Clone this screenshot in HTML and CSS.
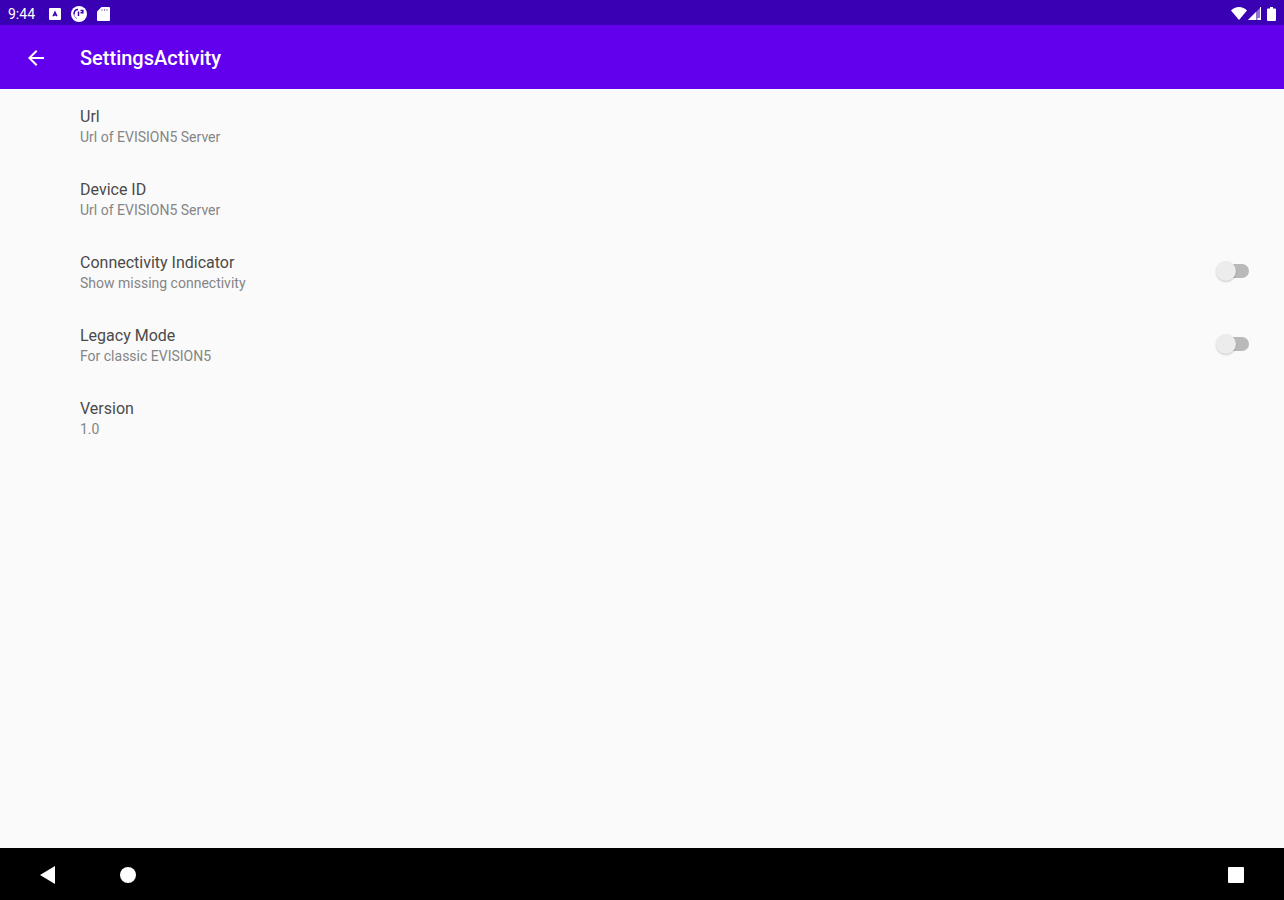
FILE: index.html
```html
<!DOCTYPE html>
<html lang="en">
<head>
  <meta charset="UTF-8">
  <meta name="viewport" content="width=device-width, initial-scale=1.0">
  <title>SettingsActivity</title>
  <link rel="stylesheet" href="styles.css">
</head>
<body>

  <div class="status-bar">
    <div class="status-left">
      <span class="clock">9:44</span>
      <svg width="12" height="12" viewBox="0 0 12 12">
        <rect width="12" height="12" rx="1" fill="#fff"/>
        <path d="M4 8.200L6 4l2 4.200M4.700 7h2.600" fill="none" stroke="#3a00b3" stroke-width="1.300"/>
      </svg>
      <svg width="16" height="16" viewBox="0 0 16 16">
        <circle cx="8" cy="8" r="8" fill="#fff"/>
        <path d="M3 8.500C3 5 4.500 3.500 7 3.500M7.500 10V5.500M9.500 4.500h2.300v2.300H9.500" fill="none" stroke="#3a00b3" stroke-width="1.500"/>
        <path d="M3 8.500c.5 2.500 1.500 3.500 3 4" fill="none" stroke="#3a00b3" stroke-opacity=".5"/>
      </svg>
      <svg width="13" height="14" viewBox="0 0 13 14">
        <path d="M4.500 0H12a1 1 0 0 1 1 1v12a1 1 0 0 1-1 1H1a1 1 0 0 1-1-1V4.500z" fill="#fff"/>
        <path d="M5 2v2M7.500 2v2M10 2v2" stroke="#3a00b3" stroke-opacity=".5"/>
      </svg>
    </div>
    <div class="status-right">
      <svg width="16" height="13" viewBox="0 0 16 13">
        <path d="M8 13L0 3.500C2 1.200 5 0 8 0s6 1.200 8 3.500z" fill="#fff"/>
      </svg>
      <svg width="13" height="13" viewBox="0 0 13 13">
        <path d="M0 13L13 0v13z" fill="#fff" fill-opacity=".45"/>
        <path d="M0 13l8-8v8zM12 0h1v13h-1zM9.500 11H12v2H9.500z" fill="#fff"/>
      </svg>
      <svg class="battery" width="9" height="14" viewBox="0 0 9 14">
        <path d="M3 0h3v1.500h2a1 1 0 0 1 1 1V13a1 1 0 0 1-1 1H1a1 1 0 0 1-1-1V2.500a1 1 0 0 1 1-1h2z" fill="#fff"/>
      </svg>
    </div>
  </div>

  <header>
    <button class="back" aria-label="Navigate up">
      <svg width="24" height="24" viewBox="0 0 24 24">
        <path d="M20 11H7.830l5.590-5.590L12 4l-8 8 8 8 1.410-1.410L7.830 13H20z" fill="#fff"/>
      </svg>
    </button>
    <h1>SettingsActivity</h1>
  </header>

  <main>
    <div class="pref">
      <div>
        <div class="title">Url</div>
        <div class="summary">Url of EVISION5 Server</div>
      </div>
    </div>
    <div class="pref">
      <div>
        <div class="title">Device ID</div>
        <div class="summary">Url of EVISION5 Server</div>
      </div>
    </div>
    <label class="pref" for="connectivity">
      <span>
        <span class="title">Connectivity Indicator</span>
        <span class="summary">Show missing connectivity</span>
      </span>
      <input type="checkbox" class="switch" id="connectivity">
    </label>
    <label class="pref" for="legacy">
      <span>
        <span class="title">Legacy Mode</span>
        <span class="summary">For classic EVISION5</span>
      </span>
      <input type="checkbox" class="switch" id="legacy">
    </label>
    <div class="pref">
      <div>
        <div class="title">Version</div>
        <div class="summary">1.0</div>
      </div>
    </div>
  </main>

  <nav>
    <button aria-label="Back">
      <svg width="16" height="18" viewBox="0 0 16 18"><path d="M0 9L15 0v18z" fill="#fff"/></svg>
    </button>
    <button aria-label="Home">
      <svg width="16" height="16" viewBox="0 0 16 16"><circle cx="8" cy="8" r="8" fill="#fff"/></svg>
    </button>
    <button class="recents" aria-label="Recent apps">
      <svg width="16" height="16" viewBox="0 0 16 16"><rect width="16" height="16" rx="1" fill="#fff"/></svg>
    </button>
  </nav>

</body>
</html>
```

FILE: styles.css
```css
* {
  box-sizing: border-box;
}
body {
  display: flex;
  flex-direction: column;
  min-height: 100vh;
  margin: 0;
  font-family: Roboto, "Liberation Sans", sans-serif;
  background: #fafafa;
}
svg {
  display: block;
}
button {
  display: flex;
  align-items: center;
  justify-content: center;
  padding: 0;
  border: none;
  background: none;
  cursor: pointer;
}
.status-bar {
  display: flex;
  justify-content: space-between;
  height: 25px;
  padding: 2px 8px 0;
  background: #3a00b3;
  color: #fff;
}
.status-left,
.status-right {
  display: flex;
  align-items: center;
}
.status-left {
  gap: 10px;
}
.status-right {
  gap: 1px;
}
.clock {
  width: 31px;
  font-size: 14px;
  line-height: 16px;
}
.battery {
  margin-left: 5px;
}
header {
  display: flex;
  align-items: center;
  height: 64px;
  padding: 2px 12px 0;
  background: #6200ee;
  color: #fff;
}
.back {
  width: 48px;
  height: 48px;
}
h1 {
  margin: 0 0 0 20px;
  font-size: 20px;
  line-height: 24px;
  font-weight: 500;
}
main {
  flex: 1;
  padding-top: 1px;
}
.pref {
  display: flex;
  align-items: center;
  justify-content: space-between;
  min-height: 73px;
  padding: 16px 34px 16px 80px;
}
.title,
.summary {
  display: block;
  line-height: 20px;
}
.title {
  font-size: 16px;
  color: #4a4a4a;
}
.summary {
  font-size: 14px;
  color: #858585;
}
.switch {
  appearance: none;
  position: relative;
  width: 34px;
  height: 20px;
  margin: 0 0 4px;
  cursor: pointer;
}
/* track */
.switch::before {
  content: "";
  position: absolute;
  top: 3px;
  left: 2px;
  right: 1px;
  height: 14px;
  border-radius: 7px;
  background: #b9b9b9;
}
/* thumb */
.switch::after {
  content: "";
  position: absolute;
  top: 0;
  left: 0;
  width: 20px;
  height: 20px;
  border-radius: 50%;
  background: #ececec;
  box-shadow: 0 1px 2px rgba(0,0,0,0.2);
}
.switch:checked::after {
  left: 14px;
  background: #6200ee;
}
nav {
  display: flex;
  align-items: center;
  height: 52px;
  padding: 2px 8px 0;
  background: #000;
}
nav button {
  width: 80px;
  height: 48px;
}
.recents {
  margin-left: auto;
}
```
